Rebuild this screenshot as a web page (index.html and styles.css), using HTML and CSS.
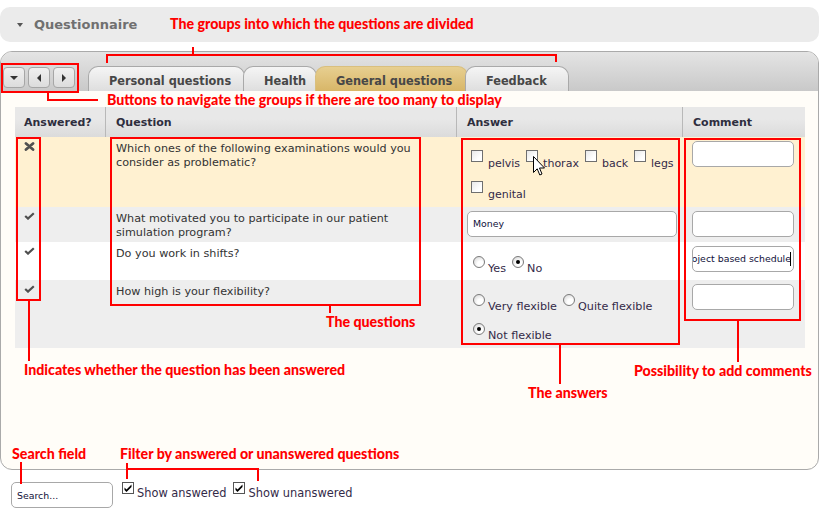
FILE: index.html
```html
<!DOCTYPE html>
<html>
<head>
<meta charset="utf-8">
<link rel="stylesheet" href="styles.css">
</head>
<body>
<div class="page">
  <div class="qheader">
    <span class="caret-down"></span>
    <span class="qtitle">Questionnaire</span>
  </div>

  <div class="panel">
    <div class="panel-top">
      <div class="navbtns">
        <div class="navbtn"><span class="tri tri-down"></span></div>
        <div class="navbtn"><span class="tri tri-left"></span></div>
        <div class="navbtn"><span class="tri tri-right"></span></div>
      </div>
      <div class="tabs">
        <div class="tab tab-personal">Personal questions</div>
        <div class="tab tab-health">Health</div>
        <div class="tab tab-general active">General questions</div>
        <div class="tab tab-feedback">Feedback</div>
      </div>
    </div>

    <div class="panel-body">
      <div class="qtable">
        <div class="row head">
          <div class="cell c1">Answered?</div>
          <div class="cell c2">Question</div>
          <div class="cell c3">Answer</div>
          <div class="cell c4">Comment</div>
        </div>

        <div class="row r1">
          <div class="cell c1">
            <svg class="ico-x" width="11" height="9" viewBox="0 0 11 9"><path d="M2 1.5 L9 7.5 M9 1.5 L2 7.5" stroke="#505050" stroke-width="2.8" stroke-linecap="round" fill="none"/></svg>
          </div>
          <div class="cell c2">Which ones of the following examinations would you consider as problematic?</div>
          <div class="cell c3">
            <div class="opts">
              <span class="opt"><span class="cbox"></span><span class="lbl">pelvis</span></span>
              <span class="opt"><span class="cbox"></span><span class="lbl">thorax</span></span>
              <span class="opt"><span class="cbox"></span><span class="lbl">back</span></span>
              <span class="opt"><span class="cbox"></span><span class="lbl">legs</span></span>
              <span class="opt"><span class="cbox"></span><span class="lbl">genital</span></span>
            </div>
          </div>
          <div class="cell c4"><div class="input comment"></div></div>
        </div>

        <div class="row r2">
          <div class="cell c1">
            <svg class="ico-ok" width="11" height="8" viewBox="0 0 11 8"><path d="M1.2 4 L4 6.6 L9.8 1.2" stroke="#505050" stroke-width="2.2" fill="none"/></svg>
          </div>
          <div class="cell c2">What motivated you to participate in our patient simulation program?</div>
          <div class="cell c3"><div class="input answer-in"><span class="itext">Money</span></div></div>
          <div class="cell c4"><div class="input comment"></div></div>
        </div>

        <div class="row r3">
          <div class="cell c1">
            <svg class="ico-ok" width="11" height="8" viewBox="0 0 11 8"><path d="M1.2 4 L4 6.6 L9.8 1.2" stroke="#505050" stroke-width="2.2" fill="none"/></svg>
          </div>
          <div class="cell c2">Do you work in shifts?</div>
          <div class="cell c3">
            <div class="opts radios">
              <span class="opt"><span class="radio"></span><span class="lbl">Yes</span></span>
              <span class="opt"><span class="radio on"></span><span class="lbl">No</span></span>
            </div>
          </div>
          <div class="cell c4"><div class="input comment filled"><span class="itext">Project based schedule</span><span class="caret"></span></div></div>
        </div>

        <div class="row r4">
          <div class="cell c1">
            <svg class="ico-ok" width="11" height="8" viewBox="0 0 11 8"><path d="M1.2 4 L4 6.6 L9.8 1.2" stroke="#505050" stroke-width="2.2" fill="none"/></svg>
          </div>
          <div class="cell c2">How high is your flexibility?</div>
          <div class="cell c3">
            <div class="opts radios">
              <span class="opt"><span class="radio"></span><span class="lbl">Very flexible</span></span>
              <span class="opt"><span class="radio"></span><span class="lbl">Quite flexible</span></span>
              <span class="opt"><span class="radio on"></span><span class="lbl">Not flexible</span></span>
            </div>
          </div>
          <div class="cell c4"><div class="input comment"></div></div>
        </div>
      </div>
    </div>
  </div>

  <div class="filters">
    <div class="input search"><span class="itext">Search...</span></div>
    <span class="fopt"><span class="cbox checked"><svg width="10" height="10" viewBox="0 0 10 10"><path d="M1.5 4.5 L3.5 6.5 L8.5 1.5 L8.5 4 L3.5 9 L1.5 7 Z" fill="#000"/></svg></span><span class="flbl">Show answered</span></span>
    <span class="fopt"><span class="cbox checked"><svg width="10" height="10" viewBox="0 0 10 10"><path d="M1.5 4.5 L3.5 6.5 L8.5 1.5 L8.5 4 L3.5 9 L1.5 7 Z" fill="#000"/></svg></span><span class="flbl">Show unanswered</span></span>
  </div>

  <!-- annotation layer -->
  <div class="note" style="left:170px;top:16px">The groups into which the questions are divided</div>
  <div class="rl" style="left:106px;top:54px;width:451px;height:2px"></div>
  <div class="rl" style="left:106px;top:54px;width:2px;height:9px"></div>
  <div class="rl" style="left:555px;top:54px;width:2px;height:8px"></div>
  <div class="rl" style="left:192px;top:47px;width:2px;height:8px"></div>

  <div class="rbox" style="left:1px;top:63px;width:78px;height:30px"></div>
  <div class="rl" style="left:47px;top:93px;width:2px;height:8px"></div>
  <div class="rl" style="left:47px;top:99px;width:51px;height:2px"></div>
  <div class="note" style="left:107px;top:92px">Buttons to navigate the groups if there are too many to display</div>

  <div class="rbox" style="left:16px;top:137px;width:25px;height:164px"></div>
  <div class="rl" style="left:28px;top:300px;width:2px;height:61px"></div>
  <div class="note" style="left:24px;top:362px">Indicates whether the question has been answered</div>

  <div class="rbox" style="left:110px;top:137px;width:311px;height:169px"></div>
  <div class="rl" style="left:329px;top:305px;width:2px;height:8px"></div>
  <div class="note" style="left:326px;top:314px">The questions</div>

  <div class="rbox" style="left:461px;top:138px;width:219px;height:207px"></div>
  <div class="rl" style="left:559px;top:344px;width:2px;height:40px"></div>
  <div class="note" style="left:528px;top:385px">The answers</div>

  <div class="rbox" style="left:684px;top:138px;width:117px;height:183px"></div>
  <div class="rl" style="left:737px;top:320px;width:2px;height:42px"></div>
  <div class="note" style="left:634px;top:363px">Possibility to add comments</div>

  <div class="note" style="left:12px;top:446px">Search field</div>
  <div class="rl" style="left:20px;top:462px;width:2px;height:22px"></div>

  <div class="note" style="left:120px;top:446px">Filter by answered or unanswered questions</div>
  <div class="rl" style="left:126px;top:463px;width:2px;height:16px"></div>
  <div class="rl" style="left:126px;top:468px;width:133px;height:2px"></div>
  <div class="rl" style="left:257px;top:468px;width:2px;height:13px"></div>

  <svg class="cursor" width="13" height="21" viewBox="0 0 13 21">
    <path d="M0.5 0.5 L0.5 16.5 L4.2 12.8 L6.8 19 L9 18 L6.5 12 L11.5 12 Z" fill="#fff" stroke="#000" stroke-width="1"/>
  </svg>
</div>
</body>
</html>
```

FILE: styles.css
```css
* { box-sizing: border-box; }
html, body { margin: 0; padding: 0; background: #fff; }
body { font-family: "DejaVu Sans", Verdana, sans-serif; color: #333; }
.page { position: relative; width: 827px; height: 510px; overflow: hidden; }

.qheader {
  margin-top: 7px;
  width: 819px;
  height: 35px;
  background: #ebebeb;
  border-radius: 10px;
  display: flex;
  align-items: center;
  padding-left: 17px;
}
.caret-down {
  width: 0; height: 0;
  border-left: 3.5px solid transparent;
  border-right: 3.5px solid transparent;
  border-top: 4px solid #555;
  margin-right: 11px;
  margin-top: 1px;
}
.qtitle { font-weight: bold; font-size: 13px; color: #707070; }

.panel {
  margin-top: 9px;
  width: 819px;
  height: 419px;
  border: 1px solid #aaa;
  border-radius: 12px;
  overflow: hidden;
  background: #fffdf8;
  display: flex;
  flex-direction: column;
}
.panel-top {
  height: 39px;
  flex: none;
  background: linear-gradient(#e4e4e4, #c9c9c9);
  display: flex;
  align-items: flex-end;
}
.navbtns { display: flex; gap: 3px; margin: 0 0 3px 2px; }
.navbtn {
  width: 22px; height: 21px;
  border: 1px solid #a6a6a6;
  border-radius: 4px;
  background: linear-gradient(#f0f0f0, #dcdcdc);
  display: flex; align-items: center; justify-content: center;
}
.tri { width: 0; height: 0; }
.tri-down { border-left: 4px solid transparent; border-right: 4px solid transparent; border-top: 4px solid #333; }
.tri-left { border-top: 4px solid transparent; border-bottom: 4px solid transparent; border-right: 4px solid #333; }
.tri-right { border-top: 4px solid transparent; border-bottom: 4px solid transparent; border-left: 4px solid #333; }

.tabs { display: flex; margin-left: 13px; }
.tab {
  height: 25px;
  border: 1px solid #a9a9a9;
  border-bottom: none;
  border-radius: 10px 10px 0 0;
  background: linear-gradient(#f5f5f5, #dedede);
  padding: 6px 0 0 20px;
  font-family: "DejaVu Sans Condensed", "DejaVu Sans", sans-serif;
  font-weight: bold;
  font-size: 12.6px;
  line-height: 16px;
  color: #474747;
  white-space: nowrap;
  margin-left: -2px;
  position: relative;
}
.tab:first-child { margin-left: 0; }
.tab-personal { width: 157px; }
.tab-health { width: 74px; }
.tab-general { width: 153px; }
.tab-feedback { width: 104px; margin-left: -3px; }
.tab.active { background: linear-gradient(#e7cf90, #d8b668); border-color: #d9bf7e; }

.panel-body { flex: 1; padding: 16px 13px 0 14px; }

.qtable { width: 790px; }
.row { display: grid; grid-template-columns: 90px 351px 226px 123px; }
.cell { font-size: 11px; line-height: 14px; }
.head { height: 30px; background: linear-gradient(#e8e8e8 40%, #dbdbdb); }
.head .cell { font-weight: bold; color: #2e2e3e; padding: 9px 0 0 10px; }
.head .c1 { padding-left: 9px; }
.head .c2, .head .c3, .head .c4 { border-left: 1px solid #b8b8b8; }

.r1 { height: 70px; background: #fff1d1; }
.r2 { height: 35px; background: #eeeeee; }
.r3 { height: 38px; background: #ffffff; }
.r4 { height: 68px; background: #eeeeee; }

.r1 .c1, .r2 .c1, .r3 .c1, .r4 .c1 { padding: 5px 0 0 9px; }
.ico-x, .ico-ok { display: block; }
.r1 .c2, .r2 .c2, .r3 .c2, .r4 .c2 { padding: 5px 8px 0 11px; color: #333; font-size: 11.2px; }
.r1 .c4, .r2 .c4, .r3 .c4, .r4 .c4 { padding: 4px 0 0 10px; }
.r1 .c3 { padding: 13px 8px 0 15px; }
.r2 .c3 { padding: 4px 0 0 11px; }
.r3 .c3, .r4 .c3 { padding: 14px 8px 0 17px; }

.opts { display: flex; flex-wrap: wrap; column-gap: 6px; }
.opts.radios { column-gap: 6px; row-gap: 0; }
.opt { display: inline-flex; align-items: flex-start; height: 31px; }
.radios .opt { height: 29px; }
.lbl { margin: 7px 0 0 5px; font-size: 11px; line-height: 14px; color: #332a48; }
.radios .lbl { margin: 6px 0 0 3px; font-size: 11.2px; }

.cbox {
  width: 12px; height: 12px; flex: none;
  border: 1px solid #6f6f6f;
  background: linear-gradient(135deg, #e8e8e8, #ffffff 70%);
  display: inline-flex; align-items: center; justify-content: center;
}
.radio {
  width: 12px; height: 12px; flex: none;
  border: 1px solid #7a7a7a;
  border-radius: 50%;
  background: radial-gradient(circle at 65% 70%, #ffffff 30%, #d6d6d6 90%);
  position: relative;
}
.radio.on::after {
  content: ""; position: absolute; left: 3px; top: 3px;
  width: 4px; height: 4px; border-radius: 50%; background: #000;
}

.input {
  background: #fff;
  border: 1px solid #a8a8a8;
  border-radius: 5px;
  height: 26px;
  display: flex; align-items: center;
  overflow: hidden;
  white-space: nowrap;
}
.comment { width: 102px; }
.answer-in { width: 210px; padding-left: 5px; }
.itext { font-size: 9.4px; color: #10103a; font-family: "DejaVu Sans", sans-serif; }
.filled { justify-content: flex-end; padding-right: 2px; }
.caret { width: 1px; height: 14px; background: #000; flex: none; margin-left: -1px; }

.filters { display: flex; align-items: flex-start; margin: 12px 0 0 11px; }
.search { width: 102px; padding-left: 5px; }
.fopt { display: inline-flex; align-items: flex-start; margin-left: 9px; }
.fopt + .fopt { margin-left: 7px; }
.cbox.checked { background: #fff; border-color: #555; }
.cbox.checked svg { display: block; }
.flbl { font-size: 11.4px; line-height: 14px; margin: 4px 0 0 3px; color: #332a48; }

.note {
  position: absolute;
  font-family: "Lato", sans-serif;
  font-weight: 900;
  font-size: 14.2px;
  line-height: 16px;
  color: #ff0000;
  white-space: nowrap;
}
.rl { position: absolute; background: #ff0000; }
.rbox { position: absolute; border: 2px solid #ff0000; }
.cursor { position: absolute; left: 533px; top: 156px; }
```
